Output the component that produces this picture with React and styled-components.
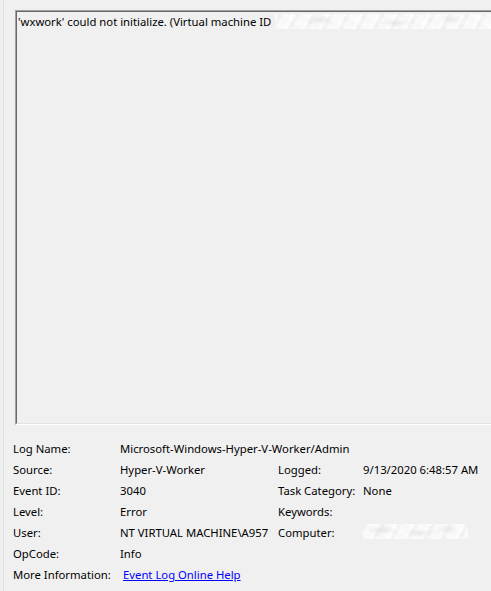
import React from "react";
import styled, { createGlobalStyle } from "styled-components";

const GlobalStyle = createGlobalStyle`
  html, body {
    margin: 0;
    padding: 0;
    background: #f0f0f0;
    overflow: hidden;
  }
  body {
    font-family: "Noto Sans", "Liberation Sans", sans-serif;
    font-size: 11.3px;
    color: #000;
  }
`;

const Page = styled.div`
  width: 491px;
  height: 591px;
  box-sizing: border-box;
  border-left: 1px solid #e2e2e2;
  margin-left: 3px;
  overflow: hidden;
`;

const Content = styled.div`
  padding: 10px 0 0 11px;
`;

const DescriptionBox = styled.div`
  width: 500px;
  height: 415px;
  box-sizing: border-box;
  border-top: 1px solid #a0a0a0;
  border-left: 1px solid #a0a0a0;
  border-bottom: 1px solid #ffffff;
  background: #f0f0f0;
`;

const DescriptionInner = styled.div`
  height: 100%;
  box-sizing: border-box;
  border-top: 1px solid #696969;
  border-left: 1px solid #696969;
  border-bottom: 1px solid #e3e3e3;
  padding: 1px 0 0 1px;
`;

const DescLine = styled.div`
  display: flex;
  align-items: center;
  height: 16px;
  white-space: nowrap;
`;

/* blurred-out text, approximated with soft overlapping streaks */
const Redacted = styled.span`
  display: inline-block;
  width: ${(p) => p.$w}px;
  height: ${(p) => p.$h}px;
  margin-left: ${(p) => p.$ml || 0}px;
  background:
    radial-gradient(ellipse 14px 5px at 20% 40%, rgba(222,222,222,0.7), transparent),
    radial-gradient(ellipse 18px 4px at 55% 60%, rgba(226,226,226,0.7), transparent),
    radial-gradient(ellipse 12px 5px at 80% 35%, rgba(224,224,224,0.6), transparent),
    repeating-linear-gradient(118deg, rgba(255,255,255,0.7) 0 3px, rgba(236,236,236,0.35) 3px 7px, rgba(252,252,252,0.5) 7px 15px),
    repeating-linear-gradient(32deg, rgba(240,240,240,0.4) 0 4px, rgba(255,255,255,0.35) 4px 11px);
  background-color: #f4f4f4;
`;

const Details = styled.div`
  display: grid;
  grid-template-columns: 107px 158px 85px 1fr;
  grid-auto-rows: 21px;
  padding: 13px 0 0 9px;
  align-items: center;
  white-space: nowrap;
`;

const Label = styled.div``;

const Value = styled.div`
  grid-column: ${(p) => p.$span || "auto"};
  overflow: hidden;
`;

const Link = styled.a`
  color: #0000ff;
  text-decoration: underline;
  margin-left: 3px;
  cursor: pointer;
`;

export default function App() {
  return (
    <>
      <GlobalStyle />
      <Page>
        <Content>
          <DescriptionBox>
            <DescriptionInner>
              <DescLine>
                'wxwork' could not initialize. (Virtual machine ID
                <Redacted $w={220} $h={15} $ml={4} />
              </DescLine>
            </DescriptionInner>
          </DescriptionBox>
        </Content>
        <Details>
          <Label>Log Name:</Label>
          <Value $span="2 / 5">Microsoft-Windows-Hyper-V-Worker/Admin</Value>
          <Label>Source:</Label>
          <Value>Hyper-V-Worker</Value>
          <Label>Logged:</Label>
          <Value>9/13/2020 6:48:57 AM</Value>
          <Label>Event ID:</Label>
          <Value>3040</Value>
          <Label>Task Category:</Label>
          <Value>None</Value>
          <Label>Level:</Label>
          <Value>Error</Value>
          <Label>Keywords:</Label>
          <Value></Value>
          <Label>User:</Label>
          <Value>NT VIRTUAL MACHINE\A957</Value>
          <Label>Computer:</Label>
          <Value>
            <Redacted $w={108} $h={15} $ml={-3} />
          </Value>
          <Label>OpCode:</Label>
          <Value $span="2 / 5">Info</Value>
          <Label>More Information:</Label>
          <Value $span="2 / 5">
            <Link>Event Log Online Help</Link>
          </Value>
        </Details>
      </Page>
    </>
  );
}
